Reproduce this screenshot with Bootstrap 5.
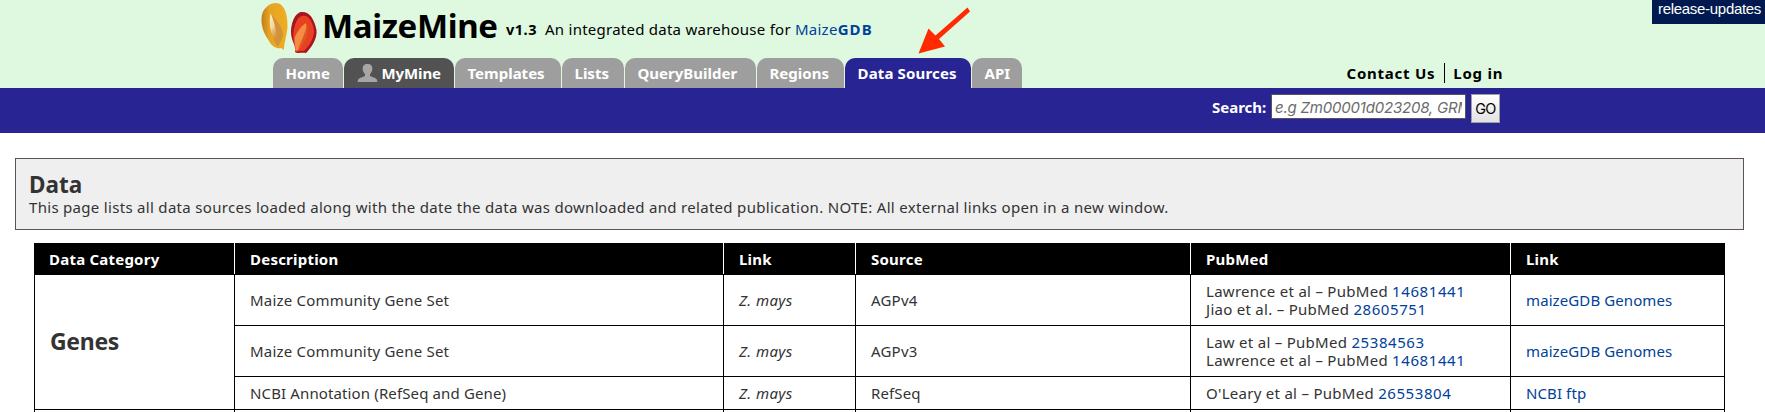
<!DOCTYPE html>
<html lang="en">
<head>
<meta charset="utf-8">
<title>MaizeMine: Data Sources</title>
<link href="https://cdn.jsdelivr.net/npm/bootstrap@5.3.0/dist/css/bootstrap.min.css" rel="stylesheet">
<style>
body{font-family:"Noto Sans","Open Sans",sans-serif;font-size:15px;line-height:18px;color:#333;background:#fff;overflow:hidden}
a{color:#00419a;text-decoration:none}
.masthead{background:#dff9e0;height:88px;color:#000}
.brandrow{height:58px;padding-left:260px}
.kernels{width:60px;height:56px;margin-right:2px}
.sitename{font-size:33px;line-height:52px;letter-spacing:-.35px;width:184px;white-space:nowrap}
.ver{font-size:14.5px;line-height:58px;letter-spacing:.5px;width:39px}
.tagline{line-height:58px;letter-spacing:.25px;white-space:nowrap}
.tagline b{letter-spacing:1.1px}
.tabrow{height:30px;padding-left:273px}
.tabrow .nav{gap:1px}
.tab{display:block;height:30px;line-height:30px;border-radius:10px 10px 0 0;background:#9e9e9e;color:#fff;font-weight:700;padding-left:12.5px;white-space:nowrap}
.tab-mine{background:#525252;letter-spacing:-.1px}
.tab-now{background:#292494;letter-spacing:.15px}
.account{margin-left:324.500px;font-weight:700;line-height:30px;color:#000}
.account a{color:#000;letter-spacing:.75px}
.account a+a{border-left:1px solid #000;padding-left:8px;margin-left:9px;line-height:18px}
.searchbar{background:#292494;height:45px;padding:6px 0 0 1212px;color:#fff}
.searchbar label{width:59px;font-weight:700;line-height:26px}
.searchbar .form-control{width:195px;height:25px;border:1px solid #555;border-radius:0;padding:2px 3px 0;font:italic 15px "Inter",sans-serif;letter-spacing:-.2px;color:#666}
.searchbar .form-control::placeholder{color:#6b6b6b}
.go{width:29px;height:29px;margin-left:5px;padding:0;border:1px solid #a0a0a0;border-radius:0;background:linear-gradient(#fff,#e2e2e2);font:14.500px/26px "Inter",sans-serif;letter-spacing:-.8px;color:#000}
.updates{width:113px;height:24px;background:#001a4f;color:#fff;font:15px/18px "Liberation Sans",sans-serif;letter-spacing:-.3px;padding-left:6px;white-space:nowrap}
.pointer{left:918px;top:6px}
.intro{margin:25px 21px 0 15px;height:72px;border:1px solid #5f534e;background:#efefef;padding:13px 13px 0}
.intro h1{font-size:22.5px;line-height:25px;font-weight:700;margin:0 0 1px}
.intro p{letter-spacing:.305px;margin:0}
.sources{width:1691px;margin:13px 0 0 34px;table-layout:fixed;border-collapse:collapse}
.sources th{background:#000;color:#fff;height:31px;padding:0 15px;border:1px solid #000;border-left-color:#fff;border-right-color:#fff;letter-spacing:.22px}
.sources th:first-child{border-left-color:#000;padding-left:14px}
.sources th:last-child{border-right-color:#000}
.sources td{border:1px solid #000;height:51px;padding:0 15px;vertical-align:middle;letter-spacing:.2px}
.sources .one td{height:33px;letter-spacing:.13px}
.sources td.pub,.sources .one td.pub{letter-spacing:.28px}
.pub a{letter-spacing:.58px}
.sources td.lnk{letter-spacing:.1px}
.sources i{letter-spacing:.4px}
.sources .cat{font-size:23px;font-weight:700;letter-spacing:-.3px;padding:0 0 2px 15px}
.sources .cut td{height:2px;border-bottom:0}
</style>
</head>
<body>
<header class="masthead position-relative">
  <div class="brandrow d-flex align-items-start">
    <svg class="kernels flex-shrink-0" viewBox="10 0 60 56">
      <defs>
        <linearGradient id="gold" x1="0" x2="1"><stop offset="0" stop-color="#c07d1c"/><stop offset=".3" stop-color="#e6a324"/><stop offset="1" stop-color="#efae22"/></linearGradient>
        <linearGradient id="shine" x1="0" y1="0" x2=".3" y2="1"><stop offset="0" stop-color="#fff3c8"/><stop offset=".5" stop-color="#f3d9a0"/><stop offset="1" stop-color="#d9942f" stop-opacity=".4"/></linearGradient>
      </defs>
      <path d="M26 3C34 3 38 14 37.500 27C37 35 34 43 34 50L31 48C27 49 22 47 19 41C14 34 11 26 11.500 18C12 9 19 3 26 3Z" fill="url(#gold)"/>
      <path d="M22 15C27 21 33 28 33 35C32 40 29 44 28 47C23 41 20 30 22 15Z" fill="#d0933a"/>
      <path d="M20.500 13.500C23 18 27 31 27.500 44C22 38 18 27 20.500 13.500Z" fill="url(#shine)"/>
      <path d="M51 12C59 11 64 18 66.500 30C67.500 39 61 48 56 53C52 52 48 54 45 52L46 48C42 41 40 34 41.500 26C43 19 46 13 51 12Z" fill="#a8141f"/>
      <path d="M52 16C59 14 63 23 64 31C64 39 59 46 54 51C50 50 47 53 45.500 51C44 42 42 34 44.500 27C46 21 48 17 52 16Z" fill="#ea4022"/>
      <path d="M56 23C58 31 55 42 48 50L45.500 51C46 46 44 42 44.500 38C47 32 51 26 56 23Z" fill="#f58b47"/>
      <path d="M57 25C59 32 56 42 48 49C51 41 55 34 57 25Z" fill="#da5a20"/>
    </svg>
    <div class="sitename fw-bold">MaizeMine</div>
    <div class="ver fw-bold">v1.3</div>
    <div class="tagline">An integrated data warehouse for <a href="#">Maize<b>GDB</b></a></div>
    <div class="updates ms-auto">release-updates</div>
  </div>
  <div class="tabrow d-flex">
    <nav class="nav flex-nowrap">
      <a class="tab" href="#" style="width:70px">Home</a>
      <a class="tab tab-mine d-flex align-items-center" href="#" style="width:110px"><svg class="me-1" width="21" height="18" viewBox="0 0 21 18"><path d="M10.500 0C14 0 15.500 2 15.300 5C15.200 7.500 14 9 13 10V12L18 14Q20.500 15 20.500 18H.5Q.5 15 3 14L8 12V10C7 9 5.800 7.500 5.700 5C5.500 2 7 0 10.500 0Z" fill="#a6a6a6"/></svg>MyMine</a>
      <a class="tab" href="#" style="width:106px">Templates</a>
      <a class="tab" href="#" style="width:62px">Lists</a>
      <a class="tab" href="#" style="width:131px">QueryBuilder</a>
      <a class="tab" href="#" style="width:87px">Regions</a>
      <a class="tab tab-now" href="#" style="width:126px">Data Sources</a>
      <a class="tab" href="#" style="width:50px">API</a>
    </nav>
    <div class="account text-nowrap"><a href="#">Contact Us</a><a href="#">Log in</a></div>
  </div>
  <svg class="pointer position-absolute" width="54" height="49" viewBox="918 6 54 49"><path d="M967.500 7.500L970 11.500L939 39L945 46.500L918.500 53.500L928.500 28.500L935.500 35.500Z" fill="#ff2a00"/></svg>
</header>
<form class="searchbar d-flex align-items-start">
  <label for="q">Search:</label>
  <input id="q" class="form-control" placeholder="e.g Zm00001d023208, GRMZM2G">
  <button class="btn go" type="button">GO</button>
</form>
<section class="intro">
  <h1>Data</h1>
  <p>This page lists all data sources loaded along with the date the data was downloaded and related publication. NOTE: All external links open in a new window.</p>
</section>
<table class="sources">
  <colgroup><col style="width:200px"><col style="width:489px"><col style="width:132px"><col style="width:335px"><col style="width:320px"><col style="width:214px"></colgroup>
  <thead><tr><th>Data Category</th><th>Description</th><th>Link</th><th>Source</th><th>PubMed</th><th>Link</th></tr></thead>
  <tbody>
    <tr><td class="cat" rowspan="3">Genes</td><td>Maize Community Gene Set</td><td><i>Z. mays</i></td><td>AGPv4</td><td class="pub">Lawrence et al – PubMed <a href="#">14681441</a><br>Jiao et al. – PubMed <a href="#">28605751</a></td><td class="lnk"><a href="#">maizeGDB Genomes</a></td></tr>
    <tr><td>Maize Community Gene Set</td><td><i>Z. mays</i></td><td>AGPv3</td><td class="pub">Law et al – PubMed <a href="#">25384563</a><br>Lawrence et al – PubMed <a href="#">14681441</a></td><td class="lnk"><a href="#">maizeGDB Genomes</a></td></tr>
    <tr class="one"><td>NCBI Annotation (RefSeq and Gene)</td><td><i>Z. mays</i></td><td>RefSeq</td><td class="pub">O'Leary et al – PubMed <a href="#">26553804</a></td><td class="lnk"><a href="#">NCBI ftp</a></td></tr>
    <tr class="cut"><td></td><td></td><td></td><td></td><td></td><td></td></tr>
  </tbody>
</table>
<script src="https://cdn.jsdelivr.net/npm/bootstrap@5.3.0/dist/js/bootstrap.bundle.min.js"></script>
</body>
</html>
